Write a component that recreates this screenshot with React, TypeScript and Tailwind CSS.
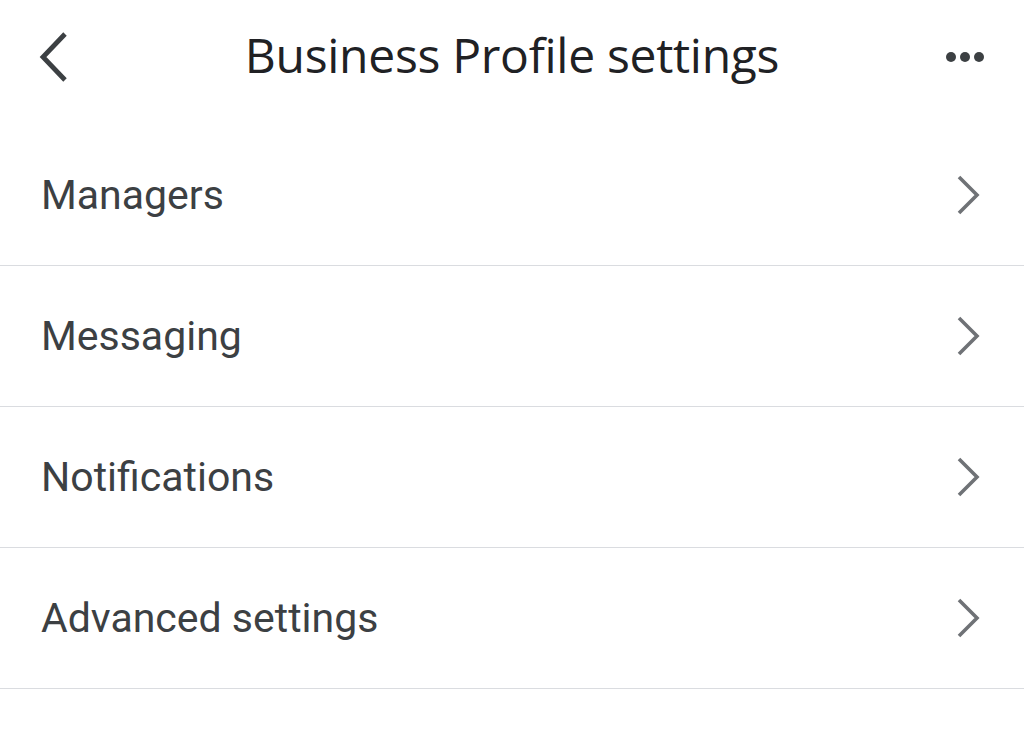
import React from "react";

const items = ["Managers", "Messaging", "Notifications", "Advanced settings"];

function BackIcon() {
  return (
    <svg width="32" height="52" viewBox="0 0 32 52" fill="none">
      <path d="M27 3 L5 26 L27 49" stroke="#3c4043" strokeWidth="4.8" strokeLinejoin="miter" />
    </svg>
  );
}

function ChevronRight() {
  return (
    <svg width="30" height="42" viewBox="0 0 30 42" fill="none">
      <path d="M5 3 L23 21 L5 39" stroke="#6f7276" strokeWidth="3.6" strokeLinejoin="miter" />
    </svg>
  );
}

export default function App() {
  return (
    <div className="w-[1024px] h-[731px] bg-white overflow-hidden" style={{ fontFamily: "Roboto, 'Liberation Sans', sans-serif" }}>
      <div className="h-[125px] grid grid-cols-[1fr_auto_1fr] items-center">
        <div className="pl-[38px] pb-[12px] flex items-center">
          <BackIcon />
        </div>
        <div className="text-[48px] leading-none text-[#202124] pb-[16px] tracking-[-0.3px]" style={{ fontFamily: "'Open Sans', Roboto, sans-serif" }}>
          Business Profile settings
        </div>
        <div className="flex justify-end pr-[40px] pb-[12px] gap-[4px]">
          <span className="w-[10px] h-[10px] rounded-full bg-[#3c4043]" />
          <span className="w-[10px] h-[10px] rounded-full bg-[#3c4043]" />
          <span className="w-[10px] h-[10px] rounded-full bg-[#3c4043]" />
        </div>
      </div>
      {items.map((t) => (
        <div key={t} className="h-[141px] border-b border-[#dadce0] flex items-center justify-between pl-[41px] pr-[40px]">
          <span className="text-[41px] text-[#3c4043] leading-none">{t}</span>
          <ChevronRight />
        </div>
      ))}
    </div>
  );
}
